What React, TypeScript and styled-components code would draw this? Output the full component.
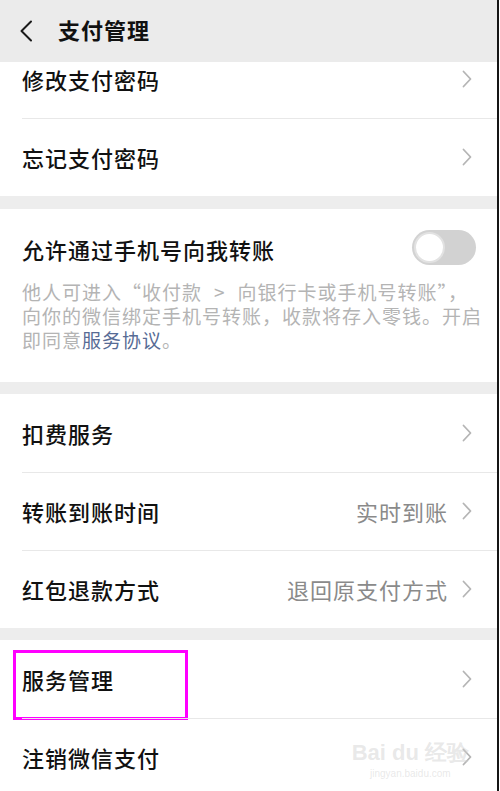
import React from "react";
import styled, { createGlobalStyle } from "styled-components";

const GlobalStyle = createGlobalStyle`
  html, body {
    margin: 0;
    padding: 0;
    background: #ffffff;
  }
  body {
    font-family: "Noto Sans CJK SC", "Noto Sans", sans-serif;
    color: #111111;
    overflow: hidden;
  }
`;

const Screen = styled.div`
  width: 497px;
  height: 791px;
  border-right: 2px solid #151515;
  background: #ededed;
  overflow: hidden;
`;

const Header = styled.header`
  position: sticky;
  top: 0;
  z-index: 2;
  height: 62px;
  display: flex;
  align-items: center;
  gap: 25px;
  padding-left: 19px;
  background: #ebebeb;
`;

const Title = styled.h1`
  margin: 0;
  font-size: 22px;
  font-weight: 700;
  letter-spacing: 1px;
  color: #111;
  line-height: 1;
  padding-bottom: 4px;
`;

const Content = styled.div`
  margin-top: -22px;
  display: flex;
  flex-direction: column;
  gap: 12px;
`;

const Section = styled.section<{ $after?: number }>`
  background: #ffffff;
  margin-bottom: ${(p) => p.$after ?? 0}px;
`;

const Row = styled.div`
  position: relative;
  height: 78px;
  display: flex;
  align-items: center;
  padding: 0 25px 0 22px;

  & + & {
    &::before {
      content: "";
      position: absolute;
      top: 0;
      left: 22px;
      right: 0;
      height: 1px;
      background: #e8e8e8;
    }
  }
`;

const Label = styled.span`
  flex: 1;
  font-size: 22px;
  font-weight: 500;
  letter-spacing: 1px;
  color: #111;
  line-height: 1;
`;

const Value = styled.span`
  font-size: 22px;
  letter-spacing: 1px;
  color: #8a8a8a;
  line-height: 1;
  margin-right: 14px;
`;

const ToggleBlock = styled.div`
  padding: 22px 21px 30px 22px;
`;

const ToggleRow = styled.div`
  height: 36px;
  display: flex;
  align-items: center;
  justify-content: space-between;
`;

const Switch = styled.div<{ $on?: boolean }>`
  width: 64px;
  height: 35px;
  border-radius: 18px;
  background: ${(p) => (p.$on ? "#07c160" : "#d2d2d2")};
  display: flex;
  align-items: center;
  padding: 0 2px;
  box-sizing: border-box;
  margin-top: -3px;
`;

const Knob = styled.div`
  width: 31px;
  height: 31px;
  border-radius: 50%;
  background: #fff;
  box-sizing: border-box;
  border: 2px solid #e2e2e2;
`;

const Note = styled.div`
  margin-top: 13px;
  font-size: 19px;
  line-height: 24px;
  letter-spacing: 1px;
  color: #b4b4b4;
`;

const NoteLine = styled.div`
  white-space: nowrap;
`;

const Gt = styled.span`
  margin: 0 12px;
`;

const Link = styled.span`
  color: #576b95;
`;

const Highlight = styled.div`
  position: absolute;
  left: 13px;
  top: 10px;
  width: 175px;
  height: 70px;
  border: 3px solid #ff00ff;
  box-sizing: border-box;
  pointer-events: none;
`;

const Watermark = styled.div`
  position: absolute;
  right: 28px;
  top: 24px;
  display: flex;
  flex-direction: column;
  align-items: center;
  color: rgba(205, 205, 205, 0.45);
  font-family: "Liberation Sans", Arial, sans-serif;
  pointer-events: none;
`;

const MarkLine = styled.div`
  font-size: 22px;
  font-weight: 700;
  line-height: 1;
`;

const MarkSmall = styled.div`
  font-size: 10px;
  margin-top: 4px;
`;

const Chevron = () => (
  <svg width="10" height="18" viewBox="0 0 10 18" fill="none">
    <path d="M1.5 1.5 L8.5 9 L1.5 16.5" stroke="#b5b5b5" strokeWidth="1.8" strokeLinecap="round" strokeLinejoin="round" />
  </svg>
);

const BackArrow = () => (
  <svg width="14" height="22" viewBox="0 0 14 22" fill="none">
    <path d="M12 1.5 L2.5 11 L12 20.5" stroke="#1a1a1a" strokeWidth="2" strokeLinecap="round" strokeLinejoin="round" />
  </svg>
);

const Item = ({ label, value, children }: { label: string; value?: string; children?: React.ReactNode }) => (
  <Row>
    <Label>{label}</Label>
    {value && <Value>{value}</Value>}
    <Chevron />
    {children}
  </Row>
);

export default function App() {
  return (
    <>
      <GlobalStyle />
      <Screen>
        <Header>
          <BackArrow />
          <Title>支付管理</Title>
        </Header>
        <Content>
          <Section $after={1}>
            <Item label="修改支付密码" />
            <Item label="忘记支付密码" />
          </Section>
          <Section>
            <ToggleBlock>
              <ToggleRow>
                <Label>允许通过手机号向我转账</Label>
                <Switch>
                  <Knob />
                </Switch>
              </ToggleRow>
              <Note>
                <NoteLine>
                  他人可进入“收付款<Gt>&gt;</Gt>向银行卡或手机号转账”，
                </NoteLine>
                <NoteLine>向你的微信绑定手机号转账，收款将存入零钱。开启</NoteLine>
                <NoteLine>
                  即同意<Link>服务协议</Link>。
                </NoteLine>
              </Note>
            </ToggleBlock>
          </Section>
          <Section>
            <Item label="扣费服务" />
            <Item label="转账到账时间" value="实时到账" />
            <Item label="红包退款方式" value="退回原支付方式" />
          </Section>
          <Section>
            <Item label="服务管理">
              <Highlight />
            </Item>
            <Item label="注销微信支付">
              <Watermark>
                <MarkLine>Bai du 经验</MarkLine>
                <MarkSmall>jingyan.baidu.com</MarkSmall>
              </Watermark>
            </Item>
          </Section>
        </Content>
      </Screen>
    </>
  );
}
